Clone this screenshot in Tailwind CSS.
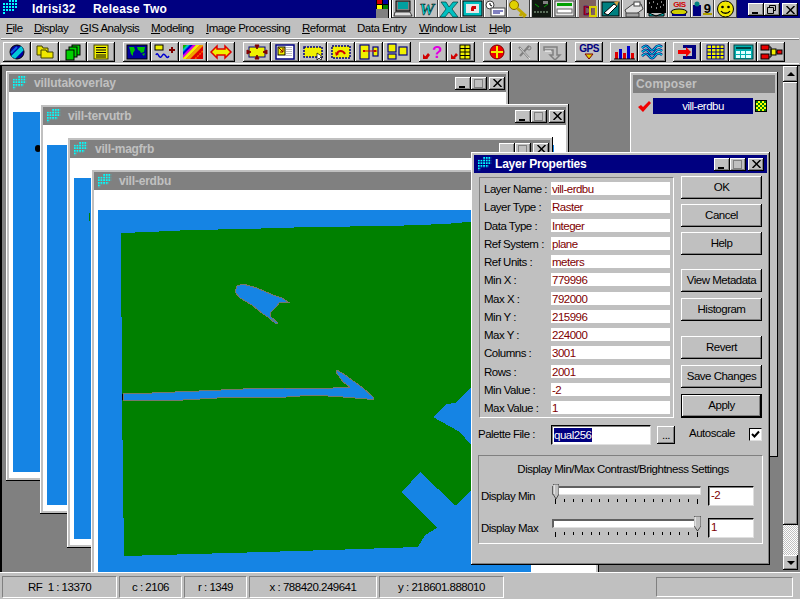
<!DOCTYPE html>
<html lang="en">
<head>
<meta charset="UTF-8">
<title>Idrisi32 Release Two</title>
<script src="https://cdn.jsdelivr.net/npm/@tailwindcss/browser@4"></script>
</head>
<body class="bg-[#c0c0c0] overflow-hidden">
<svg class="absolute w-0 h-0">
  <defs>
    <pattern id="dots" width="3" height="3" patternUnits="userSpaceOnUse"><rect width="2" height="2" fill="#00ffff"/></pattern>
    <symbol id="logo" viewBox="0 0 15 17"><path d="M6 0h9v3h0v6h-3v3H3v3H0V3h6z" fill="url(#dots)"/></symbol>
    <clipPath id="rb"><rect x="4" y="3" width="20" height="14"/></clipPath>
  </defs>
</svg>
<div class="w-[800px] h-[600px] flex flex-col font-['Liberation_Sans',Arial,sans-serif] text-[11.5px] tracking-[-0.5px] text-black bg-[#c0c0c0] overflow-hidden">

  <!-- title bar -->
  <div class="h-[18px] flex bg-[#000080] shrink-0">
    <svg class="w-[15px] h-[17px] ml-[3px]"><use href="#logo"/></svg>
    <span class="ml-[14px] w-[61px] font-bold text-white text-[12px] tracking-[0.2px] leading-[18px]">Idrisi32</span>
    <span class="font-bold text-white text-[12px] tracking-[0.2px] leading-[18px]">Release Two</span>
    <div class="ml-auto mr-[-1px] w-[13px] h-[18px] bg-[#808080] flex items-start">
      <svg class="w-[13px] h-[10px]" viewBox="0 0 13 10"><rect width="13" height="9" fill="#000"/><rect x="1" y="0" width="5" height="4" fill="#d00000"/><rect x="7" y="0" width="5" height="4" fill="#0000a0"/><rect x="1" y="5" width="5" height="4" fill="#ffff00"/><rect x="7" y="5" width="5" height="4" fill="#008000"/></svg>
    </div>
    <div class="w-[4px] h-[18px] flex"><div class="w-px bg-black"></div><div class="w-[2px] bg-white"></div><div class="w-px bg-black"></div></div>
    <div id="topIcons" class="flex h-[18px]"></div>
    <div class="flex ml-[11px] mr-[2px] mt-[3px] h-[13px]" data-ctl="top"></div>
  </div>

  <!-- menu -->
  <div class="h-[20px] flex items-center pl-[6px] shrink-0 leading-[20px]">
    <span class="w-[28px]"><u>F</u>ile</span>
    <span class="w-[46px]"><u>D</u>isplay</span>
    <span class="w-[71px]"><u>G</u>IS Analysis</span>
    <span class="w-[55px]"><u>M</u>odeling</span>
    <span class="w-[96px]"><u>I</u>mage Processing</span>
    <span class="w-[55px]"><u>R</u>eformat</span>
    <span class="w-[62px]">Data Entry</span>
    <span class="w-[70px]"><u>W</u>indow List</span>
    <span><u>H</u>elp</span>
  </div>

  <!-- toolbar -->
  <div class="mx-[1px] h-[26px] shrink-0 border-t border-b border-t-white border-b-white shadow-[inset_0_1px_0_#808080] pl-[2px] pt-[2px]">
    <div id="toolbar" class="flex pt-[1px] w-full"></div>
  </div>

  <!-- MDI area -->
  <div class="relative h-[507px] mt-[1px] shrink-0 bg-[#808080] overflow-hidden border-l-2 border-t border-l-black border-t-black">

    <!-- free-floating document windows -->
    <div class="absolute left-[4px] top-[5px] w-[503px] h-[410px] bg-[#c0c0c0] shadow-[inset_-1px_-1px_0_#000,inset_1px_1px_0_#fff] p-[3px] flex flex-col">
      <div class="h-[18px] bg-[#808080] flex items-center shrink-0">
        <svg class="w-[15px] h-[15px] ml-[3px]"><use href="#logo"/></svg>
        <span class="ml-[7px] font-bold text-[#c0c0c0] text-[12px] tracking-[-0.1px]">villutakoverlay</span>
        <div class="ml-auto mr-[1px] flex" data-ctl="win"></div>
      </div>
      <div class="flex-1 bg-white pt-[20px] pb-[6px] px-[4px] flex"><div class="flex-1 bg-[#1584e4] relative"><div class="absolute left-[22px] top-[33px] w-[6px] h-[7px] rounded-full bg-black"></div></div></div>
    </div>

    <div class="absolute left-[38px] top-[38px] w-[529px] h-[410px] bg-[#c0c0c0] shadow-[inset_-1px_-1px_0_#000,inset_1px_1px_0_#fff] p-[3px] flex flex-col">
      <div class="h-[18px] bg-[#808080] flex items-center shrink-0">
        <svg class="w-[15px] h-[15px] ml-[3px]"><use href="#logo"/></svg>
        <span class="ml-[7px] font-bold text-[#c0c0c0] text-[12px] tracking-[-0.2px]">vill-tervutrb</span>
        <div class="ml-auto mr-[1px] flex" data-ctl="win"></div>
      </div>
      <div class="flex-1 bg-white pt-[20px] pb-[6px] pl-[4px] pr-[12px] flex"><div class="flex-1 bg-[#1584e4]"></div></div>
    </div>

    <div class="absolute left-[65px] top-[71px] w-[486px] h-[411px] bg-[#c0c0c0] shadow-[inset_-1px_-1px_0_#000,inset_1px_1px_0_#fff] p-[3px] flex flex-col">
      <div class="h-[18px] bg-[#808080] flex items-center shrink-0">
        <svg class="w-[15px] h-[15px] ml-[3px]"><use href="#logo"/></svg>
        <span class="ml-[7px] font-bold text-[#c0c0c0] text-[12px] tracking-[-0.2px]">vill-magfrb</span>
        <div class="ml-auto mr-[1px] flex" data-ctl="win"></div>
      </div>
      <div class="flex-1 bg-white pt-[20px] pb-[6px] px-[4px] flex"><div class="flex-1 bg-[#1584e4] relative"><div class="absolute left-[15px] top-[35px] w-px h-[8px] bg-[#008000]"></div></div></div>
    </div>

    <div class="absolute left-[89px] top-[103px] w-[508px] h-[420px] bg-[#c0c0c0] shadow-[inset_-1px_-1px_0_#000,inset_1px_1px_0_#fff] p-[3px] flex flex-col">
      <div class="h-[18px] bg-[#808080] flex items-center shrink-0">
        <svg class="w-[15px] h-[15px] ml-[3px]"><use href="#logo"/></svg>
        <span class="ml-[7px] font-bold text-[#c0c0c0] text-[12px] tracking-[-0.2px]">vill-erdbu</span>
      </div>
      <div class="flex-1 bg-white pt-[20px] pl-[4px] flex">
        <!-- map: viewBox uses screen coordinates -->
        <svg class="w-[433px] h-[362px] bg-[#1584e4] shrink-0" viewBox="98 210 433 362" shape-rendering="crispEdges">
          <path fill="#008000" d="M121 233 L148 232 L190 230 L245 229 L310 227 L390 226 L445 224 L480 221 L531 219 L531 470 L471 490 L458 504 L455 505 L420 472 L402 492 L419 510 L437 528 L425 535 L418 547 L330 550 L230 553 L124 556 L122 400 Z"/>
          <path fill="#1584e4" d="M433 417 L440 410 L447 404 L455 403 L471 388 L531 388 L531 445 L471 445 L460 432 Z"/>
          <path fill="#1584e4" stroke="#77796b" stroke-width="1" d="M237 286 L243 284 L257 288 L273 295 L282 298 L288 302 L280 302 L276 307 L270 313 L271 317 L278 323 L276 324 L268 317 L263 314 L252 305 L240 298 L235 292 Z"/>
          <path fill="#1584e4" stroke="#77796b" stroke-width="1" d="M123 393 L152 393 L199 391 L243 389 L285 388 L333 388 L350 387 L343 382 L336 372 L337 370 L345 375 L363 388 L373 397 L373 399 L367 399 L343 397 L313 395 L287 397 L217 398 L183 400 L123 400 Z"/>
          <rect x="122" y="394" width="1" height="6" fill="#000"/>
        </svg>
      </div>
    </div>

    <!-- composer -->
    <div class="absolute left-[628px] top-[6px] w-[148px] h-[385px] bg-[#c0c0c0] shadow-[inset_-1px_-1px_0_#000,inset_1px_1px_0_#fff] p-[3px]">
      <div class="h-[18px] bg-[#808080] pl-[3px] font-bold text-[#c0c0c0] tracking-[0.2px] leading-[18px] text-[12px]">Composer</div>
      <div class="flex items-center mt-[5px] ml-[5px] h-[16px]">
        <svg class="w-[13px] h-[11px]" viewBox="0 0 13 11"><path d="M0 6l3-2 2 2 6-6 2 2-8 9z" fill="#f00000"/></svg>
        <div class="ml-[2px] w-[100px] h-[16px] bg-[#000080] text-white text-center leading-[16px]">vill-erdbu</div>
        <div class="ml-[2px] w-[12px] h-[12px] border border-black bg-[repeating-conic-gradient(#ffff00_0_25%,#008000_0_50%)] bg-[length:4px_4px]"></div>
      </div>
    </div>

    <!-- scrollbar -->
    <div class="absolute right-[2px] top-0 bottom-[2px] w-[15px] flex flex-col">
      <div class="h-[16px] bg-[#c0c0c0] shadow-[inset_-1px_-1px_0_#000,inset_1px_1px_0_#fff,inset_-2px_-2px_0_#808080] flex items-center justify-center"><div class="w-0 h-0 border-x-[4px] border-x-transparent border-b-[4px] border-b-black"></div></div>
      <div class="h-[443px] bg-[#c0c0c0] shadow-[inset_-1px_-1px_0_#000,inset_1px_1px_0_#fff,inset_-2px_-2px_0_#808080]"></div>
      <div class="flex-1 bg-[repeating-conic-gradient(#ffffff_0_25%,#c0c0c0_0_50%)] bg-[length:2px_2px]"></div>
      <div class="h-[15px] bg-[#c0c0c0] shadow-[inset_-1px_-1px_0_#000,inset_1px_1px_0_#fff,inset_-2px_-2px_0_#808080] flex items-center justify-center"><div class="w-0 h-0 border-x-[4px] border-x-transparent border-t-[4px] border-t-black"></div></div>
    </div>

    <!-- Layer Properties dialog -->
    <div class="absolute left-[469px] top-[86px] w-[299px] h-[413px] bg-[#c0c0c0] shadow-[inset_-1px_-1px_0_#000,inset_1px_1px_0_#fff,inset_-2px_-2px_0_#808080] p-[3px] flex flex-col">
      <div class="h-[18px] bg-[#000080] flex items-center shrink-0 w-[293px]">
        <svg class="w-[15px] h-[15px] ml-[3px]"><use href="#logo"/></svg>
        <span class="ml-[3px] font-bold text-white text-[12px] tracking-[-0.2px]">Layer Properties</span>
        <div class="ml-auto mr-[3px] flex" data-ctl="win"></div>
      </div>
      <div class="flex pl-[5px] pt-[3px]">
        <div class="w-[195px] h-[241px] mt-[1px] border border-t-[#808080] border-l-[#808080] border-r-white border-b-white pt-[4px] pl-[4px]">
          <div class="flex flex-col justify-between h-[232px]">
            <div class="flex h-[13px] leading-[15px]"><span class="w-[67px]">Layer Name :</span><span class="w-[119px] bg-white text-[#800000] pl-px">vill-erdbu</span></div>
            <div class="flex h-[13px] leading-[15px]"><span class="w-[67px]">Layer Type :</span><span class="w-[119px] bg-white text-[#800000] pl-px">Raster</span></div>
            <div class="flex h-[13px] leading-[15px]"><span class="w-[67px]">Data Type :</span><span class="w-[119px] bg-white text-[#800000] pl-px">Integer</span></div>
            <div class="flex h-[13px] leading-[15px]"><span class="w-[67px]">Ref System :</span><span class="w-[119px] bg-white text-[#800000] pl-px">plane</span></div>
            <div class="flex h-[13px] leading-[15px]"><span class="w-[67px]">Ref Units :</span><span class="w-[119px] bg-white text-[#800000] pl-px">meters</span></div>
            <div class="flex h-[13px] leading-[15px]"><span class="w-[67px]">Min X :</span><span class="w-[119px] bg-white text-[#800000] pl-px">779996</span></div>
            <div class="flex h-[13px] leading-[15px]"><span class="w-[67px]">Max X :</span><span class="w-[119px] bg-white text-[#800000] pl-px">792000</span></div>
            <div class="flex h-[13px] leading-[15px]"><span class="w-[67px]">Min Y :</span><span class="w-[119px] bg-white text-[#800000] pl-px">215996</span></div>
            <div class="flex h-[13px] leading-[15px]"><span class="w-[67px]">Max Y :</span><span class="w-[119px] bg-white text-[#800000] pl-px">224000</span></div>
            <div class="flex h-[13px] leading-[15px]"><span class="w-[67px]">Columns :</span><span class="w-[119px] bg-white text-[#800000] pl-px">3001</span></div>
            <div class="flex h-[13px] leading-[15px]"><span class="w-[67px]">Rows :</span><span class="w-[119px] bg-white text-[#800000] pl-px">2001</span></div>
            <div class="flex h-[13px] leading-[15px]"><span class="w-[67px]">Min Value :</span><span class="w-[119px] bg-white text-[#800000] pl-px">-2</span></div>
            <div class="flex h-[13px] leading-[15px]"><span class="w-[67px]">Max Value :</span><span class="w-[119px] bg-white text-[#800000] pl-px">1</span></div>
          </div>
        </div>
        <div class="ml-[7px] w-[81px] flex flex-col">
          <div class="h-[23px] bg-[#c0c0c0] shadow-[inset_-1px_-1px_0_#000,inset_1px_1px_0_#fff,inset_-2px_-2px_0_#808080] text-center leading-[23px]">OK</div>
          <div class="h-[23px] mt-[5px] bg-[#c0c0c0] shadow-[inset_-1px_-1px_0_#000,inset_1px_1px_0_#fff,inset_-2px_-2px_0_#808080] text-center leading-[23px]">Cancel</div>
          <div class="h-[23px] mt-[5px] bg-[#c0c0c0] shadow-[inset_-1px_-1px_0_#000,inset_1px_1px_0_#fff,inset_-2px_-2px_0_#808080] text-center leading-[23px]">Help</div>
          <div class="h-[23px] mt-[14px] bg-[#c0c0c0] shadow-[inset_-1px_-1px_0_#000,inset_1px_1px_0_#fff,inset_-2px_-2px_0_#808080] text-center leading-[23px]">View Metadata</div>
          <div class="h-[23px] mt-[6px] bg-[#c0c0c0] shadow-[inset_-1px_-1px_0_#000,inset_1px_1px_0_#fff,inset_-2px_-2px_0_#808080] text-center leading-[23px]">Histogram</div>
          <div class="h-[23px] mt-[15px] bg-[#c0c0c0] shadow-[inset_-1px_-1px_0_#000,inset_1px_1px_0_#fff,inset_-2px_-2px_0_#808080] text-center leading-[23px]">Revert</div>
          <div class="h-[23px] mt-[6px] bg-[#c0c0c0] shadow-[inset_-1px_-1px_0_#000,inset_1px_1px_0_#fff,inset_-2px_-2px_0_#808080] text-center leading-[23px]">Save Changes</div>
          <div class="h-[24px] mt-[6px] bg-[#c0c0c0] border border-black shadow-[inset_-1px_-1px_0_#000,inset_1px_1px_0_#fff,inset_-2px_-2px_0_#808080] text-center leading-[21px]">Apply</div>
        </div>
      </div>
      <!-- palette row -->
      <div class="flex items-center h-[20px] mt-[7px] pl-[4px]">
        <span class="w-[73px]">Palette File :</span>
        <div class="w-[100px] h-[20px] bg-white border border-t-black border-l-black border-r-[#dfdfdf] border-b-[#dfdfdf] shadow-[inset_1px_1px_0_#808080] pl-[2px] pt-[2px]"><span class="block w-fit bg-[#000080] text-white leading-[14px] pr-[1px]">qual256</span></div>
        <div class="ml-[6px] w-[18px] h-[18px] bg-[#c0c0c0] shadow-[inset_-1px_-1px_0_#000,inset_1px_1px_0_#fff,inset_-2px_-2px_0_#808080] text-center leading-[18px]">...</div>
        <span class="ml-[14px] w-[60px] -mt-[2px]">Autoscale</span>
        <div class="w-[13px] h-[13px] -mt-[2px] bg-white border border-t-black border-l-black border-r-[#dfdfdf] border-b-[#dfdfdf] flex items-center justify-center"><svg class="w-[9px] h-[9px]" viewBox="0 0 9 9"><path d="M1 4l2.500 2.500L8 1.500" fill="none" stroke="#000" stroke-width="2"/></svg></div>
      </div>
      <!-- display settings group -->
      <div class="w-[285px] h-[89px] mt-[10px] ml-[4px] border border-t-[#808080] border-l-[#808080] border-r-white border-b-white relative shrink-0">
        <div class="text-center h-[14px] mt-[6px] pl-[5px] leading-[14px]">Display Min/Max Contrast/Brightness Settings</div>
        <div class="flex mt-[10px] pl-[2px] h-[20px]">
          <span class="w-[71px] mt-[2px]">Display Min</span>
          <div class="relative w-[149px] h-[20px]">
            <div class="h-[9px] bg-white border-t-2 border-l-2 border-t-[#606060] border-l-[#606060] border-r border-b border-r-[#dfdfdf] border-b-[#dfdfdf]"></div>
            <svg class="absolute left-[1px] top-[-2px] w-[6px] h-[15px]" viewBox="0 0 6 15"><path d="M0 0h6v10l-3 5-3-5z" fill="#c0c0c0" stroke="#000" stroke-width=".6"/><path d="M1 1v9" stroke="#fff"/></svg>
            <div class="flex justify-between mt-[4px] px-[3px]" data-ticks></div>
          </div>
          <div class="ml-[7px] w-[46px] h-[20px] bg-white border border-t-black border-l-black border-r-[#dfdfdf] border-b-[#dfdfdf] shadow-[inset_1px_1px_0_#808080] text-[#800000] pl-[2px] leading-[17px]">-2</div>
        </div>
        <div class="flex mt-[12px] pl-[2px] h-[20px]">
          <span class="w-[71px] mt-[2px]">Display Max</span>
          <div class="relative w-[149px] h-[20px]">
            <div class="h-[9px] mt-[1px] bg-white border-t-2 border-l-2 border-t-[#606060] border-l-[#606060] border-r border-b border-r-[#dfdfdf] border-b-[#dfdfdf]"></div>
            <svg class="absolute left-[142px] top-[-2px] w-[7px] h-[15px]" viewBox="0 0 7 15"><path d="M0 0h7v10l-3.500 5-3.500-5z" fill="#c0c0c0" stroke="#000" stroke-width=".6"/><path d="M1 1v9" stroke="#fff"/></svg>
            <div class="flex justify-between mt-[4px] px-[3px]" data-ticks></div>
          </div>
          <div class="ml-[7px] w-[46px] h-[20px] bg-white border border-t-black border-l-black border-r-[#dfdfdf] border-b-[#dfdfdf] shadow-[inset_1px_1px_0_#808080] text-[#800000] pl-[2px] leading-[17px]">1</div>
        </div>
      </div>
    </div>
  </div>

  <!-- status bar -->
  <div class="flex-1 border-t border-t-white flex pt-[2px] pl-[2px] gap-[2px] shadow-[inset_0_-1px_0_#fff]">
    <div class="w-[115px] h-[22px] mt-px border border-t-[#808080] border-l-[#808080] border-r-white border-b-white text-center leading-[20px]">RF&nbsp; 1 : 13370</div>
    <div class="w-[63px] h-[22px] mt-px border border-t-[#808080] border-l-[#808080] border-r-white border-b-white text-center leading-[20px]">c : 2106</div>
    <div class="w-[63px] h-[22px] mt-px border border-t-[#808080] border-l-[#808080] border-r-white border-b-white text-center leading-[20px]">r : 1349</div>
    <div class="w-[128px] h-[22px] mt-px border border-t-[#808080] border-l-[#808080] border-r-white border-b-white text-center leading-[20px]">x : 788420.249641</div>
    <div class="w-[125px] h-[22px] mt-px border border-t-[#808080] border-l-[#808080] border-r-white border-b-white text-center leading-[20px]">y : 218601.888010</div>
    <div class="ml-[150px] w-[137px] h-[20px] mt-[2px] border border-t-[#808080] border-l-[#808080] border-r-white border-b-white"></div>
  </div>
</div>

<script>
  // window control buttons
  const ctlBtn = "w-[16px] h-[13px] bg-[#c0c0c0] shadow-[inset_-1px_-1px_0_#000,inset_1px_1px_0_#fff,inset_-2px_-2px_0_#808080] flex items-center justify-center";
  const minSvg = '<svg width="10" height="9"><rect x="1" y="7" width="6" height="2" fill="#000"/></svg>';
  const maxSvg = '<svg width="10" height="9"><rect x=".5" y=".5" width="8" height="8" fill="none" stroke="#808080"/><rect x="0" y="0" width="9" height="1" fill="#808080"/></svg>';
  const restoreSvg = '<svg width="10" height="9"><path d="M2.500 2.500V.5h6v5h-2M.5 2.500h6v6h-6z" fill="none" stroke="#000"/></svg>';
  const closeSvg = '<svg width="9" height="8"><path d="M.5 0l8 8M8.500 0l-8 8" stroke="#000" stroke-width="1.500"/></svg>';
  document.querySelectorAll('[data-ctl]').forEach(el => {
    const top = el.dataset.ctl === 'top';
    el.innerHTML = `<div class="${ctlBtn}">${minSvg}</div><div class="${ctlBtn}">${top ? restoreSvg : maxSvg}</div><div class="${ctlBtn} ml-[2px]">${closeSvg}</div>`;
  });

  // slider ticks
  document.querySelectorAll('[data-ticks]').forEach(el => {
    let html = '';
    for (let i = 0; i < 17; i++) {
      html += (i === 0 || i === 16) ? '<div class="w-px h-[5px] bg-black"></div>' : '<div class="w-px h-[3px] bg-black"></div>';
    }
    el.innerHTML = html;
  });

  // title bar toolbox icons
  const topIcons = [
    '<rect x="4" y="1" width="14" height="10" fill="#808080" stroke="#000"/><rect x="6" y="2" width="10" height="7" fill="#00a0a0"/><path d="M3 12h15l2 4H2z" fill="#e0e0e0" stroke="#000" stroke-width=".7"/>',
    '<text x="11.500" y="15" text-anchor="middle" font-family="Liberation Serif" font-weight="bold" font-style="italic" font-size="17" fill="#00d0d0" stroke="#000" stroke-width=".5">W</text>',
    '<path d="M3 2h5l3 5 4-5h5l-6 7 6 8h-5l-4-5-4 5H2l6-8z" fill="#00c0c0" stroke="#004040" stroke-width=".7"/>',
    '<rect x="2" y="1" width="19" height="15" fill="#00c0c0" stroke="#000"/><rect x="5" y="4" width="13" height="9" fill="#e8e8e8"/><path d="M11 6h4v3h-2v2h-3V8z" fill="#d00000"/>',
    '<circle cx="6" cy="5" r="4" fill="#fff" stroke="#404040"/><path d="M6 3v2l2 1" stroke="#000" fill="none"/><rect x="7" y="8" width="14" height="8" fill="#fff" stroke="#404040"/><path d="M9 11h10M9 13h7" stroke="#000080" stroke-width="1"/>',
    '<circle cx="7" cy="5" r="4.500" fill="#e0d000" stroke="#806000"/><path d="M10 8l9 8M15 13l-2 3M18 15l-2 2" stroke="#c0a800" stroke-width="3" fill="none"/>',
    '<rect x="2" width="19" height="17" fill="#101810"/><path d="M5 4l4 3M14 7l4-3" stroke="#00a000"/><path d="M4 12h15" stroke="#a0c0a0" stroke-dasharray="2 1"/><rect x="13" y="1" width="5" height="3" fill="#808080"/>',
    '<rect x="2" y="1" width="19" height="15" fill="#e8e8e8" stroke="#404040"/><rect x="4" y="3" width="15" height="3" fill="#00a000"/><rect x="4" y="9" width="15" height="4" fill="#fff" stroke="#606060"/>',
    '<rect x="3" width="17" height="18" fill="#806060"/><text x="11" y="15" text-anchor="middle" font-family="Liberation Sans" font-weight="bold" font-size="12" fill="#d00000" stroke="#000080" stroke-width=".4">D</text><path d="M14 7h6v9h-6z" fill="none" stroke="#d8d000" stroke-width="2"/>',
    '<rect x="3" y="2" width="17" height="14" fill="#008080" stroke="#000"/><path d="M5 13L15 4l3 2-9 9z" fill="#fff" stroke="#000"/><path d="M15 2l5-1-2 5z" fill="#d0a040"/>',
    '<path d="M3 10l8-6h8l2 5-8 6H5z" fill="#e0e0e0" stroke="#404040"/><path d="M4 13h13v4H4z" fill="#a0a0a0" stroke="#404040"/><rect x="12" y="2" width="6" height="4" fill="#fff" stroke="#404040"/>',
    '<rect x="2" y="0" width="19" height="13" fill="#000"/><path d="M4 3h1M8 2h1M12 4h1M16 2h1M6 7h1M11 8h1M15 7h1M18 5h1" stroke="#fff"/><path d="M4 13l7 3 8-3v3H4z" fill="#00c0c0" stroke="#000"/>',
    '<text x="11.500" y="7" text-anchor="middle" font-family="Liberation Sans" font-weight="bold" font-size="8" fill="#d00000">GIS</text><ellipse cx="11" cy="12" rx="8" ry="3" fill="#d0d000" stroke="#000"/><path d="M4 15h14" stroke="#000080" stroke-width="2"/>',
    '<rect x="2" y="5" width="8" height="11" fill="#000080"/><circle cx="6" cy="4" r="2.500" fill="#008080"/><text x="16" y="13" text-anchor="middle" font-family="Liberation Sans" font-weight="bold" font-size="13" fill="#000">9</text><path d="M12 14h9" stroke="#b0a000" stroke-width="2"/>',
    '<circle cx="11.500" cy="9" r="8" fill="#f0e800" stroke="#000"/><circle cx="8.500" cy="7" r="1.300" fill="#000"/><circle cx="14.500" cy="7" r="1.300" fill="#000"/><path d="M7 11c2 3 7 3 9 0" fill="none" stroke="#000" stroke-width="1.300"/>'
  ];
  document.getElementById('topIcons').innerHTML = topIcons.map(i =>
    `<div class="w-[23px] h-[18px] bg-[#c0c0c0] shadow-[inset_-1px_-1px_0_#404040,inset_1px_0_0_#fff]"><svg width="23" height="18" viewBox="0 0 23 18">${i}</svg></div>`
  ).join('');

  // main toolbar icons, grouped
  const tools = [
    [
      '<circle cx="14" cy="10" r="7" fill="#0000a0" stroke="#000"/><path d="M9 15L19 5M11 16l9-9" stroke="#00c8d8" stroke-width="2.500"/><path d="M8 11l6-6" stroke="#1060e0" stroke-width="2"/>',
      '<path d="M6 4h5l1 2h5v7H6z" fill="#e8e000" stroke="#404000"/><path d="M10 8h5l1 2h6v6H10z" fill="#f0e800" stroke="#404000"/>',
      '<rect x="13" y="3" width="8" height="10" fill="#00d000" stroke="#000"/><rect x="10" y="5" width="8" height="10" fill="#00d000" stroke="#000"/><rect x="7" y="8" width="8" height="10" fill="#00d000" stroke="#000"/>',
      '<rect x="7" y="3" width="14" height="14" fill="#f0f000" stroke="#404000"/><path d="M9 5.500h10M9 8h10M9 10.500h10M9 13h10M9 15h10" stroke="#000"/>'
    ],
    [
      '<rect x="4" y="3" width="20" height="14" fill="#0000a0" stroke="#000"/><path d="M6 5h5l1 3-2 3v3l-2-2-1-4zM14 5h8l-1 5-3 1-1-2-2-1zM19 12l3-1-1 3z" fill="#00c000"/>',
      '<rect x="4" y="3" width="8" height="5" fill="#f0f000" stroke="#000"/><path d="M5 13c2-4 3 4 5 2s2-4 4-2 2 4 4 1" fill="none" stroke="#0000d0" stroke-width="1.500"/><path d="M21 5v6M18 8h6" stroke="#800000" stroke-width="2"/>',
      '<g clip-path="url(#rb)" fill="none" stroke-width="3"><rect x="4" y="3" width="20" height="14" fill="#e00000" stroke="none"/><path d="M2 8l7-7" stroke="#00c000"/><path d="M2 11l10-10" stroke="#00c0c0"/><path d="M2 14l13-13" stroke="#0000e0"/><path d="M2 17L18 1" stroke="#e000e0"/><path d="M3 19L21 1" stroke="#f0f000"/><path d="M7 19L25 1" stroke="#f0a000"/><path d="M14 19L28 5" stroke="#ff6000" stroke-width="1.500" stroke-dasharray="2 1"/></g>',
      '<path d="M4 10l6-6v3h8V4l6 6-6 6v-3h-8v3z" fill="#f0f000" stroke="#e00000" stroke-width="1.500"/>'
    ],
    [
      '<rect x="6" y="5" width="16" height="10" fill="#f0f000" stroke="#000080"/><path d="M4 8l4 2-4 2zM24 8l-4 2 4 2zM12 3l2 4 2-4zM12 17l2-4 2 4z" fill="#800000" stroke="#800000"/>',
      '<rect x="5" y="3" width="18" height="14" fill="#fff" stroke="#000080" stroke-width="1.500"/><rect x="7" y="5" width="7" height="8" fill="#f0f000" stroke="#000"/><path d="M8 6l4 4M12 6v4H9" stroke="#800000" fill="none"/><path d="M16 5v10M18 5v10M20 5v10" stroke="#808080" stroke-dasharray="1 1"/>',
      '<rect x="5" y="5" width="18" height="10" fill="#f0f000" stroke="#000080" stroke-width="1.500" stroke-dasharray="2 1"/><path d="M18 11l0 7 2-2 2 2 1-1-2-2h3z" fill="#fff" stroke="#000" stroke-width=".7"/>',
      '<rect x="5" y="4" width="18" height="12" fill="#f0f000" stroke="#000080" stroke-width="1.500" stroke-dasharray="2 1"/><path d="M10 12c1-4 6-4 8 0" fill="none" stroke="#d00000" stroke-width="2"/><path d="M8 10l4 2-3 2z" fill="#d00000"/>',
      '<rect x="5" y="3" width="9" height="14" fill="#f0f000" stroke="#000080" stroke-width="1.200"/><rect x="18" y="5" width="5" height="9" fill="#f0f000" stroke="#000080" stroke-width="1.200"/><path d="M9 9h13" stroke="#d00000"/><rect x="8" y="8" width="2" height="2" fill="#d00000"/><rect x="19" y="8" width="2" height="2" fill="#d00000"/>',
      '<rect x="5" y="2" width="8" height="8" fill="#f0f000" stroke="#000080" stroke-width="1.200"/><rect x="16" y="5" width="8" height="8" fill="#f0f000" stroke="#000080" stroke-width="1.200"/><rect x="5" y="12" width="8" height="5" fill="#f0f000" stroke="#000080" stroke-width="1.200"/>'
    ],
    [
      '<path d="M5 16l4-5 2 2-3 4zM4 17v-5l5 5z" fill="#d00000"/><text x="18" y="16" text-anchor="middle" font-family="Liberation Sans" font-weight="bold" font-size="17" fill="#e000e0">?</text>',
      '<path d="M4 17v-5l5 5zM6 15l3-4 2 2-3 3z" fill="#d00000"/><rect x="13" y="3" width="10" height="14" fill="#f0f000" stroke="#000"/><path d="M13 6.500h10M13 10h10M13 13.500h10M18 3v14" stroke="#000"/>'
    ],
    [
      '<circle cx="14" cy="10" r="7" fill="#f00000" stroke="#800000"/><path d="M14 4v12M8 10h12" stroke="#f0f000" stroke-width="2"/>',
      '<path d="M8 5l10 11M18 4l-9 10" stroke="#808080" stroke-width="2" fill="none"/><path d="M9 6l10 11" stroke="#fff" stroke-width=".7"/><circle cx="18" cy="6" r="2" fill="none" stroke="#808080"/>',
      '<path d="M5 5h13v8h3l-5 5-5-5h3V8H5z" fill="#c0c0c0" stroke="#808080" stroke-width="1.500"/><path d="M6 9h6" stroke="#fff"/>'
    ],
    [
      '<text x="14" y="10" text-anchor="middle" font-family="Liberation Sans" font-weight="bold" font-size="10" fill="#000080">GPS</text><path d="M10 12h8l-4 5z" fill="#e0d000" stroke="#800000"/>'
    ],
    [
      '<rect x="5" y="10" width="3" height="7" fill="#e00000"/><rect x="9" y="7" width="3" height="10" fill="#0000d0"/><rect x="13" y="11" width="3" height="6" fill="#e00000"/><rect x="17" y="4" width="3" height="13" fill="#0000d0"/><rect x="21" y="11" width="3" height="6" fill="#e00000"/><path d="M4 17h21" stroke="#000"/>',
      '<path d="M4 6c3-3 5-3 7 0s4 3 6 0 5-3 7-1M4 10c3-3 5-3 7 0s4 3 6 0 5-3 7-1M4 14c3-3 5-3 7 0s4 3 6 0 5-3 7-1" fill="none" stroke="#000080" stroke-width="2.500"/><path d="M4 6c3-3 5-3 7 0s4 3 6 0 5-3 7-1M4 10c3-3 5-3 7 0s4 3 6 0 5-3 7-1M4 14c3-3 5-3 7 0s4 3 6 0 5-3 7-1" fill="none" stroke="#00e0e0" stroke-width="1.200"/>'
    ],
    [
      '<path d="M10 3h13v14H10v-3h9V6h-9z" fill="#000080"/><path d="M5 8h8V5l5 5-5 5v-3H5z" fill="#f00000"/>',
      '<rect x="6" y="3" width="17" height="14" fill="#f0f000" stroke="#000080"/><path d="M6 6.500h17M6 10h17M6 13.500h17M10.500 3v14M15 3v14M19 3v14" stroke="#000080"/>',
      '<rect x="5" y="3" width="19" height="14" fill="#00b0b0" stroke="#004040"/><path d="M7 5h15v2H7z" fill="#004040"/><path d="M7 9h4v3H7zM12 9h4v3h-4zM17 9h5v3h-5zM7 13h4v3H7zM12 13h4v3h-4zM17 13h5v3h-5z" fill="#e0ffff"/>',
      '<rect x="4" y="3" width="8" height="5" fill="#e80000" stroke="#000"/><rect x="4" y="12" width="8" height="5" fill="#e80000" stroke="#000"/><rect x="14" y="7" width="5" height="6" fill="#f0f000" stroke="#000"/><rect x="20" y="8" width="5" height="4" fill="#e80000" stroke="#000"/><path d="M12 5h2v10h-2M19 10h1" stroke="#000" fill="none"/>'
    ]
  ];
  const groupGaps = ['', 'ml-[8px]', 'ml-[8px]', 'ml-[8px]', 'ml-[8px]', 'ml-[8px]', 'ml-[7px]', 'ml-[7px]'];
  document.getElementById('toolbar').innerHTML = tools.map((group, g) =>
    `<div class="flex ${groupGaps[g]}">` + group.map(i =>
      `<div class="w-[28px] h-[20px] bg-[#c0c0c0] shadow-[inset_-1px_-1px_0_#000,inset_1px_1px_0_#fff,inset_-2px_-2px_0_#808080]"><svg width="28" height="20" viewBox="0 0 28 20">${i}</svg></div>`
    ).join('') + '</div>'
  ).join('');
</script>
</body>
</html>
